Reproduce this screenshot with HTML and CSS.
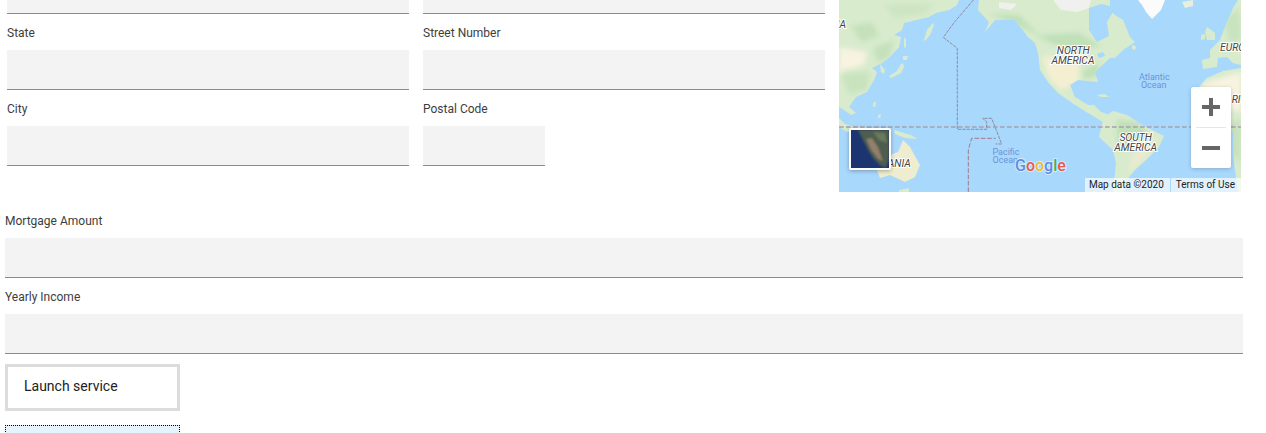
FILE: index.html
```html
<!DOCTYPE html>
<html lang="en">
<head>
    <meta charset="utf-8">
    <meta name="viewport" content="width=device-width, initial-scale=1.0">
    <title>Launch service</title>
    <link rel="stylesheet" href="styles.css">
</head>
<body>
    <div class="page">
        <div class="top-row">
            <form class="address-form">
                <div class="field"><input type="text" class="cut-input"></div>
                <div class="field"><input type="text" class="cut-input"></div>

                <div class="field">
                    <label for="state">State</label>
                    <input type="text" id="state">
                </div>
                <div class="field">
                    <label for="streetNumber">Street Number</label>
                    <input type="text" id="streetNumber">
                </div>

                <div class="field">
                    <label for="city">City</label>
                    <input type="text" id="city">
                </div>
                <div class="field">
                    <label for="postalCode">Postal Code</label>
                    <input type="text" id="postalCode" class="short-input">
                </div>
            </form>

            <div class="map">
                <svg class="map-img" viewBox="0 0 402 192" preserveAspectRatio="none">
                    <defs>
                        <filter id="soft" x="-10%" y="-10%" width="120%" height="120%"><feGaussianBlur stdDeviation="0.5"/></filter>
                        <filter id="patch" x="-30%" y="-30%" width="160%" height="160%"><feGaussianBlur stdDeviation="2.4"/></filter>
                        <filter id="thumb" x="-20%" y="-20%" width="140%" height="140%"><feGaussianBlur stdDeviation="1"/></filter>
                        <clipPath id="landClip">
                            <path d="M0 0H120L118 5L110 10L97 13L90 17L65 23L63 30L55 35L62 37L60 47L50 58L43 63L33 68L38 72L35 80L28 92L17 97L10 107L0 107Z"/>
                            <path d="M140 0H271V10L276 15L284 20L291 37L296 42L284 50L276 58L271 58L256 72L259 82L239 80L231 85L236 97L249 105L255 105L262 112L271 115L264 122L249 113L233 103L219 93L209 82L201 70L199 53L196 43L189 37L176 20L156 20L146 32L150 22L139 10Z"/>
                            <path d="M261 132L265 117L274 111L288 115L303 125L325 136L320 147L308 159L296 170L286 182L285 192H274L277 163L274 150L260 137Z"/>
                            <path d="M358 89L368 78L384 71L402 68V192H399L395 163L394 133L388 117L374 111L360 100Z"/>
                            <path d="M371 50L381 40L386 27L394 8L399 0H402V65L394 63L388 57L379 58L378 67L364 69L363 60L371 58Z"/>
                        </clipPath>
                    </defs>
                    <rect width="402" height="192" fill="#a9d8fd"/>

                    <!-- land -->
                    <g filter="url(#soft)" fill="#d8ebcd">
                        <path d="M0 0H120L118 5L110 10L97 13L90 17L65 23L63 30L55 35L62 37L60 47L50 58L43 63L33 68L38 72L35 80L28 92L17 97L10 107L17 113L12 115L5 110L0 107Z"/>
                        <path d="M85 40L88 30L94 23L95 25L91 35L86 41Z"/>
                        <path d="M65 37L67 40L67 48L65 47Z"/>
                        <path d="M41 64L46 70L45 74L42 72Z"/>
                        <path d="M50 76L58 71L62 64L64 63L65 67L62 73L52 78Z"/>
                        <path d="M64 56L69 56L68 60L64 60Z"/>
                        <path d="M34 103L37 101L36 107L34 107Z"/>
                        <path d="M39 115L42 114L41 118L39 118Z"/>
                        <path d="M0 118L6 124L16 127L26 126L28 132L8 132L0 127Z"/>
                        <path d="M55 130L72 135L78 139L66 138L56 134Z"/>

                        <path d="M140 0H271V10L276 15L284 20L291 37L296 42L284 50L276 58L271 58L256 72L259 82L239 80L231 85L236 97L249 105L255 105L262 112L271 115L264 122L249 113L233 103L219 93L209 82L201 70L199 53L196 43L189 37L176 20L156 20L146 32L150 22L139 10Z"/>
                        <path d="M258 95L266 94L270 97L262 97Z"/>
                        <path d="M293 45L297 46L296 50L293 49Z"/>

                        <path d="M371 50L381 40L386 27L394 8L399 0H402V65L394 63L388 57L379 58L378 67L364 69L363 60L371 58Z"/>
                        <path d="M368 27L376 33L376 40L368 40L366 32Z"/>
                        <path d="M362 35L366 34L366 39L362 40Z"/>
                        <path d="M343 2L354 0L354 6L346 8Z" fill="#e8f0dc"/>

                        <path d="M261 132L265 117L274 111L288 115L303 125L325 136L320 147L308 159L296 170L286 182L285 192H274L277 163L274 150L260 137Z"/>
                        <path d="M358 89L368 78L384 71L402 68V192H399L395 163L394 133L388 117L374 111L360 100Z"/>
                        <path d="M38 170L46 157L59 152L64 140L71 147L81 165L76 177L66 182L51 175L41 178Z" fill="#eeedcf"/>
                        <path d="M60 190L70 188L70 192H60Z"/>
                    </g>

                    <!-- vegetation, desert -->
                    <g clip-path="url(#landClip)">
                        <g filter="url(#patch)">
                            <path d="M12 26L33 22L40 36L22 42Z" fill="#c4e1bb"/>
                            <path d="M34 48L55 40L50 58L38 62Z" fill="#c4e1bb"/>
                            <path d="M2 74L30 72L28 90L10 94Z" fill="#c8e3be"/>
                            <path d="M45 4L95 4L85 14L55 18Z" fill="#cde5c3"/>
                            <path d="M0 47L28 52L25 65L5 70L0 75Z" fill="#f8f3e0"/>
                            <path d="M150 14L180 15L200 35L240 33L262 46L230 50L205 40L190 30Z" fill="#bfe0b8"/>
                            <path d="M243 72L258 62L262 74L245 80Z" fill="#c0e0b8"/>
                            <path d="M203 57L240 58L240 82L222 90L210 78Z" fill="#f5efd2"/>
                            <path d="M278 120L300 122L310 135L290 150L278 142Z" fill="#c0e0b8"/>
                            <path d="M296 140L318 138L306 158L290 172Z" fill="#ebead0"/>
                            <path d="M362 84L402 72V112L378 106Z" fill="#f8f3e0"/>
                            <path d="M380 125L402 120V165L390 150Z" fill="#c8e2bc"/>
                            <path d="M385 20L400 8L402 40L390 42Z" fill="#c8e3bd"/>
                        </g>
                    </g>

                    <!-- hudson bay and lakes, ice -->
                    <g filter="url(#soft)" fill="#a9d8fd">
                        <path d="M250 8L262 4L271 6L274 12L268 22L270 36L258 42L250 30Z"/>
                        <path d="M258 54L264 52L266 56L260 58Z"/>
                    </g>
                    <g filter="url(#soft)" fill="#f0f0ee">
                        <path d="M214 0H252L250 8L238 12L222 10Z"/>
                        <path d="M160 2L178 4L172 10L160 8Z"/>
                        <path d="M299 0H326L322 10L313 19L307 12L303 5Z" fill="#fbfbfb"/>
                    </g>

                    <!-- boundaries -->
                    <g transform="translate(-9 0) scale(0.3333)">
                        <g fill="none" stroke="#8d7f8c" stroke-width="2.6">
                            <path d="M27 381H1233" stroke="#ab9fae" stroke-width="4" stroke-dasharray="14 7"/>
                            <path d="M430 0L372 68L340 112L382 145V388H470V365L458 355H485L515 432H497" stroke-dasharray="10 3"/>
                            <path d="M415 576V450L425 415H497" stroke="#a56a78" stroke-dasharray="14 5"/>
                        </g>

                        <g class="map-label">
                            <text x="730" y="163" text-anchor="middle">NORTH</text>
                            <text x="729" y="191" text-anchor="middle">AMERICA</text>
                            <text x="917" y="424" text-anchor="middle">SOUTH</text>
                            <text x="917" y="454" text-anchor="middle">AMERICA</text>
                            <text x="208" y="501" text-anchor="middle">ANIA</text>
                            <text x="1170" y="152">EURO</text>
                            <text x="1205" y="310">RIC</text>
                            <text x="20" y="84">IA</text>
                        </g>
                        <g class="ocean-label">
                            <text x="973" y="240" text-anchor="middle">Atlantic</text>
                            <text x="971" y="264" text-anchor="middle">Ocean</text>
                            <text x="528" y="465" text-anchor="middle">Pacific</text>
                            <text x="526" y="489" text-anchor="middle">Ocean</text>
                        </g>
                    </g>
                    <text class="google-logo" x="176" y="171"><tspan fill="#5a8fe8">G</tspan><tspan fill="#e8594a">o</tspan><tspan fill="#f0bb2e">o</tspan><tspan fill="#5a8fe8">g</tspan><tspan fill="#4aa85c">l</tspan><tspan fill="#e8594a">e</tspan></text>
                </svg>

                <div class="sat-toggle">
                    <svg viewBox="0 0 38 38" preserveAspectRatio="none">
                        <rect width="38" height="38" fill="#1c3470"/>
                        <path d="M7 0H38V28L35 38L30 36L22 28L16 18L11 8Z" fill="#4e5d50" filter="url(#thumb)"/>
                        <path d="M15 9L21 8L27 17L32 31L27 29L20 20Z" fill="#93806a" filter="url(#thumb)"/>
                        <path d="M22 2L34 3L36 13L28 10Z" fill="#6a7a5c" filter="url(#thumb)"/>
                    </svg>
                </div>

                <div class="zoom-ctrl">
                    <button type="button" class="zoom-btn" aria-label="Zoom in">
                        <svg width="20" height="20" viewBox="0 0 20 20"><path d="M1 8H8V1H12V8H19V12H12V19H8V12H1Z" fill="#666"/></svg>
                    </button>
                    <div class="zoom-sep"></div>
                    <button type="button" class="zoom-btn" aria-label="Zoom out">
                        <svg width="20" height="20" viewBox="0 0 20 20"><path d="M1 8H19V12H1Z" fill="#666"/></svg>
                    </button>
                </div>

                <div class="map-credits">
                    <span class="map-data">Map data ©2020</span>
                    <span class="map-terms">Terms of Use</span>
                </div>
            </div>
        </div>

        <form class="loan-form">
            <label for="mortgage">Mortgage Amount</label>
            <input type="text" id="mortgage">
            <label for="income">Yearly Income</label>
            <input type="text" id="income">
            <button type="button" class="btn">Launch service</button>
            <button type="button" class="btn btn-focus"></button>
        </form>
    </div>
</body>
</html>
```

FILE: styles.css
```css
body {
    margin: 0;
    background-color: #ffffff;
    font-family: Roboto, "Liberation Sans", sans-serif;
    color: #3d3d3d;
}

.page {
    height: 433px;
    overflow: hidden;
}

.top-row {
    display: flex;
    padding-left: 7px;
}

.address-form {
    display: grid;
    grid-template-columns: 402px 402px;
    column-gap: 14px;
    align-content: start;
}

label {
    display: block;
    height: 36px;
    padding-top: 12px;
    box-sizing: border-box;
    font-size: 12px;
    line-height: 14px;
}

input {
    display: block;
    width: 100%;
    height: 40px;
    box-sizing: border-box;
    margin: 0;
    padding: 0 16px;
    border: 0;
    border-bottom: 1px solid #8c8c8c;
    background-color: #f3f3f3;
}

.cut-input {
    height: 14px;
}

.short-input {
    width: 122px;
}

.map {
    position: relative;
    width: 402px;
    height: 192px;
    margin-left: 14px;
    overflow: hidden;
}

.map-img {
    display: block;
    width: 402px;
    height: 192px;
}

.map-label text {
    font-family: Roboto, sans-serif;
    font-style: italic;
    font-size: 31px;
    fill: #444;
    stroke: #ffffff;
    stroke-width: 6px;
    paint-order: stroke;
}

.ocean-label text {
    font-family: Roboto, sans-serif;
    font-size: 27px;
    fill: #6c93d6;
}

.google-logo {
    font-family: Roboto, sans-serif;
    font-weight: 500;
    font-size: 16px;
    stroke: #ffffff;
    stroke-opacity: 0.5;
    stroke-width: 2px;
    paint-order: stroke;
}

.sat-toggle {
    position: absolute;
    left: 10px;
    top: 128px;
    width: 38px;
    height: 38px;
    border: 2px solid #ffffff;
    border-radius: 2px;
    box-shadow: 0 1px 4px rgba(0, 0, 0, 0.3);
}

.sat-toggle svg {
    display: block;
    width: 38px;
    height: 38px;
}

.zoom-ctrl {
    position: absolute;
    left: 352px;
    top: 87px;
    width: 40px;
    height: 81px;
    background-color: #ffffff;
    border-radius: 2px;
    box-shadow: 0 1px 4px rgba(0, 0, 0, 0.2);
}

.zoom-btn {
    display: flex;
    align-items: center;
    justify-content: center;
    width: 40px;
    height: 40px;
    padding: 0;
    border: 0;
    background: none;
}

.zoom-sep {
    height: 1px;
    margin: 0 5px;
    background-color: #e6e6e6;
}

.map-credits {
    position: absolute;
    right: 0;
    bottom: 0;
    display: flex;
    gap: 1px;
    font-family: Roboto, sans-serif;
    font-size: 10px;
    line-height: 14px;
    color: #222;
}

.map-data,
.map-terms {
    padding: 0 6px 0 5px;
    background-color: rgba(255, 255, 255, 0.65);
}

.map-data {
    padding-left: 4px;
}

.loan-form {
    margin-top: 10px;
    padding: 0 23px 0 5px;
}

.btn {
    display: block;
    width: 175px;
    height: 47px;
    box-sizing: border-box;
    margin-top: 10px;
    padding: 0 16px 3px;
    border: 3px solid #dcdcdc;
    background-color: #ffffff;
    font-family: Roboto, "Liberation Sans", sans-serif;
    font-size: 14px;
    color: #222;
    text-align: left;
}

.btn-focus {
    margin-top: 14px;
    border: 1px dotted #000000;
    background-color: #e5f3ff;
}
```
